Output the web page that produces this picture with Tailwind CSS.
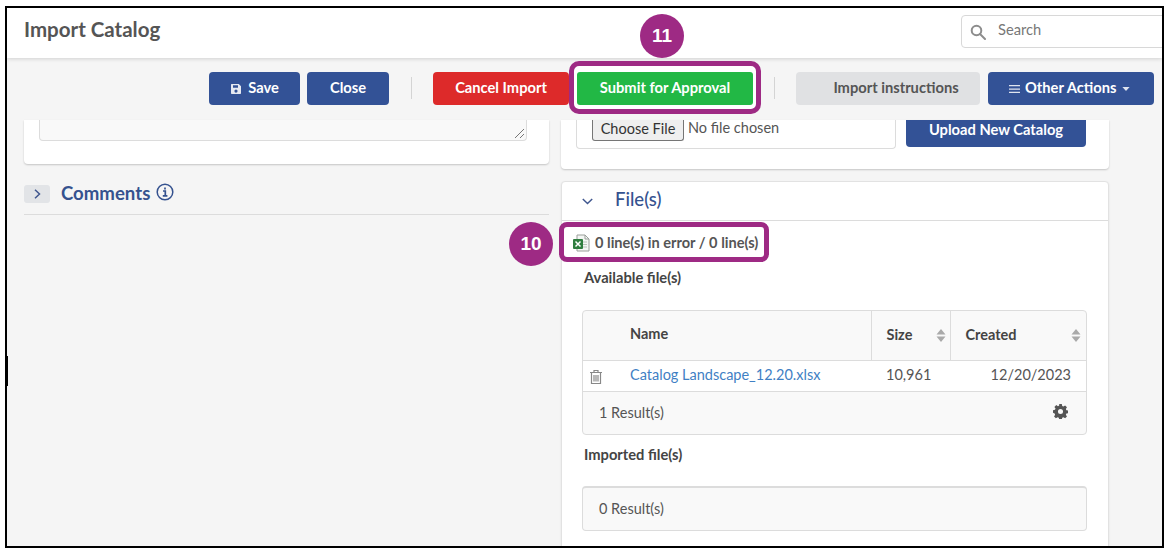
<!DOCTYPE html>
<html lang="en">

<head>
    <meta charset="UTF-8">
    <meta name="viewport" content="width=device-width, initial-scale=1.0">
    <title>Import Catalog</title>
    <script src="https://cdn.jsdelivr.net/npm/@tailwindcss/browser@4"></script>
</head>

<body class="bg-white font-['Lato','Liberation_Sans',sans-serif] overflow-hidden">
    <div class="ml-[5px] mt-[6px] w-[1159px] h-[542px] border-2 border-black bg-[#f5f5f5] relative overflow-hidden">

        <!-- Page header -->
        <header class="h-[50px] bg-white shadow-[0_1px_4px_rgba(0,0,0,0.15)] flex items-start justify-between pl-[17px]">
            <h1 class="text-[20.5px] font-bold text-[#555] leading-none mt-[11px]">Import Catalog</h1>
            <div class="w-[217px] h-[33px] shrink-0 -mr-[16px] mt-[7px] border border-[#d8d8d8] rounded-[4px] flex items-center pl-[8px] gap-[12px]">
                <svg class="w-[16px] h-[16px] text-[#8d8d8d]" viewBox="0 0 16 16" fill="none" stroke="currentColor" stroke-width="2"><circle cx="6.5" cy="6.5" r="4.8"/><path d="M10 10l5 5" stroke-linecap="round"/></svg>
                <span class="text-[14.7px] text-[#777] pb-[4px]">Search</span>
            </div>
        </header>

        <!-- Toolbar -->
        <div class="h-[62px] flex items-start pt-[14px] pl-[202px] text-[14.7px] font-bold text-white">
            <button class="w-[91px] h-[33px] pb-[2px] bg-[#335296] rounded-[4px] flex items-center justify-center gap-[6px]">
                <svg class="w-[12px] h-[12px] mt-[2px]" viewBox="0 0 12 12" fill="#e6e9f1"><path d="M1.5 1h7.3L11 3.2v6.8c0 .6-.4 1-1 1H2c-.6 0-1-.4-1-1V1.500zM3 2.300v2.500h5V2.300zM6 6.500a1.600 1.600 0 100 3.200 1.600 1.600 0 000-3.200z" fill-rule="evenodd"/></svg>
                Save
            </button>
            <button class="w-[82px] h-[33px] pb-[2px] ml-[7px] bg-[#335296] rounded-[4px]">Close</button>
            <div class="w-px h-[22px] bg-[#d4d4d4] ml-[22px] mt-[5px]"></div>
            <button class="w-[136px] h-[33px] pb-[2px] ml-[21px] bg-[#dd2a2a] rounded-[4px]">Cancel Import</button>
            <button class="w-[176px] h-[33px] pb-[2px] ml-[8px] bg-[#22b845] rounded-[3px] relative z-20">Submit for Approval</button>
            <div class="w-px h-[22px] bg-[#d4d4d4] ml-[21px] mt-[5px]"></div>
            <button class="w-[184px] h-[33px] pb-[2px] ml-[21px] pl-[16px] bg-[#e0e1e3] text-[#555] rounded-[4px]">Import instructions</button>
            <button class="w-[166px] h-[33px] pb-[2px] ml-[8px] pl-[21px] bg-[#335296] rounded-[4px] flex items-center gap-[5px]">
                <svg class="w-[11px] h-[10px] mt-[2px]" viewBox="0 0 11 10" fill="#dfe4ef"><path d="M0 1h11v1.300H0zM0 4.400h11v1.300H0zM0 7.800h11v1.300H0z"/></svg>
                Other Actions
                <svg class="w-[8px] h-[4px] ml-[1px] mt-[3px]" viewBox="0 0 9 5" fill="#dfe4ef"><path d="M0 0h9L4.500 5z"/></svg>
            </button>
        </div>

        <!-- Content -->
        <div class="flex items-start gap-[12px] pl-[17px] h-[428px]">

            <!-- Left column -->
            <div class="w-[525px] shrink-0">
                <div class="h-[44px] bg-white rounded-b-[4px] shadow-[0_1px_2px_rgba(0,0,0,0.2)] pl-[15px] pr-[22px]">
                    <div class="h-[21px] bg-[#f9f9f9] border border-t-0 border-[#dcdcdc] rounded-b-[4px] flex items-end justify-end">
                        <svg class="w-[11px] h-[11px] mb-[1px] mr-[1px]" viewBox="0 0 11 11" fill="none" stroke="#777" stroke-width="1"><path d="M1 10l9-9M6 10l4-4"/></svg>
                    </div>
                </div>
                <div class="mt-[19px] h-[32px] border-b border-[#dcdcdc] flex items-start">
                    <span class="w-[26px] h-[18px] mt-[2px] bg-[#e2e4e7] rounded-[3px] flex items-center justify-center">
                        <svg class="w-[7px] h-[10px]" viewBox="0 0 7 10" fill="none" stroke="#40578f" stroke-width="1.500"><path d="M1 .8L5.500 5 1 9.200"/></svg>
                    </span>
                    <span class="ml-[11px] text-[18.6px] font-bold text-[#35528f] leading-[20px]">Comments</span>
                    <svg class="w-[18px] h-[18px] ml-[6px]" viewBox="0 0 18 18" fill="none" stroke="#35528f" stroke-width="1.500"><circle cx="9" cy="9" r="7.800"/><path d="M7 8h2.300v4.500M6.800 12.800h4.600M9 4.600v1.800" stroke-width="1.700"/></svg>
                </div>
            </div>

            <!-- Right column -->
            <div class="w-[548px] shrink-0">
                <div class="h-[49px] bg-white rounded-b-[4px] shadow-[0_1px_2px_rgba(0,0,0,0.2)] pl-[15px] flex items-start">
                    <div class="w-[320px] h-[29px] bg-white border border-t-0 border-[#dcdcdc] rounded-b-[4px] flex items-start pl-[15px] text-[14.5px] text-[#555]">
                        <button class="w-[92px] h-[21px] bg-[#efefef] border border-[#767676] border-t-0 rounded-b-[3px] text-[#333] leading-[13px] pb-[4px]">Choose File</button>
                        <span class="ml-[4px] leading-[14px] mt-[1px]">No file chosen</span>
                    </div>
                    <button class="w-[180px] h-[27px] ml-[10px] bg-[#335296] rounded-b-[4px] text-white text-[14.7px] font-bold leading-[18px] pb-[12px]">Upload New Catalog</button>
                </div>

                <div class="mt-[12px] h-[400px] bg-white border border-[#e2e2e2] rounded-t-[4px] shadow-[0_1px_2px_rgba(0,0,0,0.1)]">
                    <div class="h-[39px] border-b border-[#dcdcdc] flex items-center pl-[20px]">
                        <svg class="w-[11px] h-[7px]" viewBox="0 0 11 7" fill="none" stroke="#40578f" stroke-width="1.500"><path d="M.8 1l4.700 4.500L10.200 1"/></svg>
                        <span class="ml-[22px] text-[18.5px] font-medium text-[#35528f] pb-[2px]">File(s)</span>
                    </div>

                    <div class="relative z-20 h-[20px] mt-[12px] pl-[10px] flex items-center gap-[5px] w-[210px] text-[14.6px] font-bold text-[#555]">
                        <svg class="w-[18px] h-[18px] shrink-0" viewBox="0 0 18 18"><path d="M5 1h8l4 4v12H5z" fill="#f4f6f4" stroke="#9a9f9a"/><path d="M13 1v4h4" fill="none" stroke="#9a9f9a"/><path d="M11 8h4M11 10.500h4M11 13h4" stroke="#b9c2b9"/><rect x="1" y="5" width="10" height="10" rx="1" fill="#2f7d3f"/><path d="M3.500 7.500l5 5M8.500 7.500l-5 5" stroke="#fff" stroke-width="1.500"/></svg>
                        <span class="whitespace-nowrap">0 line(s) in error / 0 line(s)</span>
                    </div>

                    <p class="relative z-20 mt-[14px] ml-[22px] text-[14.7px] font-bold text-[#444] leading-[20px]">Available file(s)</p>

                    <!-- Available files table -->
                    <div class="mt-[23px] ml-[20px] w-[505px] border border-[#dcdcdc] rounded-[4px] bg-[#f9f9f9] overflow-hidden text-[14.5px]">
                        <table class="w-full table-fixed border-collapse">
                            <colgroup>
                                <col class="w-[47px]">
                                <col class="w-[241px]">
                                <col class="w-[79px]">
                                <col>
                            </colgroup>
                            <thead>
                                <tr class="h-[49px] text-left font-bold text-[#444]">
                                    <th class="font-bold"></th>
                                    <th class="font-bold pb-[3px]">Name</th>
                                    <th class="font-bold border-l border-[#dcdcdc] pl-[15px]">
                                        <div class="flex items-center justify-between pr-[4px]"><span>Size</span>
                                            <svg class="w-[10px] h-[13px]" viewBox="0 0 10 13" fill="#aaa"><path d="M5 0l4.500 5.500h-9zM5 13L.5 7.500h9z"/></svg>
                                        </div>
                                    </th>
                                    <th class="font-bold border-l border-[#dcdcdc] pl-[15px]">
                                        <div class="flex items-center justify-between pr-[5px]"><span>Created</span>
                                            <svg class="w-[10px] h-[13px]" viewBox="0 0 10 13" fill="#aaa"><path d="M5 0l4.500 5.500h-9zM5 13L.5 7.500h9z"/></svg>
                                        </div>
                                    </th>
                                </tr>
                            </thead>
                            <tbody>
                                <tr class="h-[31px] bg-white border-y border-[#dcdcdc] text-[#555]">
                                    <td class="pl-[6px]">
                                        <svg class="w-[14px] h-[16px] mt-[3px]" viewBox="0 0 14 16" fill="none" stroke="#888" stroke-width="1.200"><path d="M1 3.500h12M5 3.500V1.500h4v2M2.500 3.500v11h9v-11M5 6v6.500M7 6v6.500M9 6v6.500"/></svg>
                                    </td>
                                    <td class="pb-[1px]"><a href="#" class="text-[#3f7fc4]">Catalog Landscape_12.20.xlsx</a></td>
                                    <td class="pl-[15px] pb-[1px]">10,961</td>
                                    <td class="text-right pr-[15px] pb-[1px]">12/20/2023</td>
                                </tr>
                            </tbody>
                        </table>
                        <div class="h-[42px] flex items-center justify-between pl-[16px] pr-[18px] text-[#555]">
                            <span>1 Result(s)</span>
                            <svg class="w-[15px] h-[15px] -mt-[2px]" viewBox="0 0 16 16" fill="#555"><path fill-rule="evenodd" d="M6.600 0h2.800l.4 2.100 1.300.6 1.800-1.200 2 2-1.200 1.800.6 1.300 2.100.4v2.800l-2.100.4-.6 1.300 1.200 1.800-2 2-1.800-1.200-1.300.6-.4 2.100H6.600l-.4-2.100-1.300-.6-1.800 1.200-2-2 1.200-1.800-.6-1.300L0 9.400V6.600l2.100-.4.6-1.300L1.500 3.100l2-2 1.800 1.200 1.300-.6zM8 5.300a2.700 2.700 0 100 5.400 2.700 2.700 0 000-5.400z"/></svg>
                        </div>
                    </div>

                    <p class="mt-[9px] ml-[22px] text-[14.7px] font-bold text-[#444] leading-[20px]">Imported file(s)</p>

                    <div class="mt-[22px] ml-[20px] w-[505px] h-[45px] border border-[#dcdcdc] border-t-2 rounded-[4px] bg-[#f9f9f9] flex items-center pl-[16px] text-[14.5px] text-[#555]">0 Result(s)</div>
                </div>
            </div>
        </div>

        <!-- Thicker bit of the frame on the left edge -->
        <div class="absolute left-0 top-[348px] w-px h-[30px] bg-black"></div>

        <!-- Callout 11 -->
        <div class="absolute z-10 left-[562px] top-[53px] w-[192px] h-[53px] bg-white border-[5px] border-[#9e2a84] rounded-[10px]"></div>
        <div class="absolute z-30 left-[633px] top-[6px] w-[44px] h-[44px] rounded-full bg-[#9e2a84] flex items-center justify-center text-white text-[19px] font-bold font-['Liberation_Sans',sans-serif]">11</div>

        <!-- Callout 10 -->
        <div class="absolute z-10 left-[552px] top-[214px] w-[210px] h-[40px] bg-white border-[5px] border-[#9e2a84] rounded-[8px]"></div>
        <div class="absolute z-30 left-[502px] top-[214px] w-[44px] h-[44px] rounded-full bg-[#9e2a84] flex items-center justify-center text-white text-[19px] font-bold font-['Liberation_Sans',sans-serif]">10</div>
    </div>
</body>

</html>
